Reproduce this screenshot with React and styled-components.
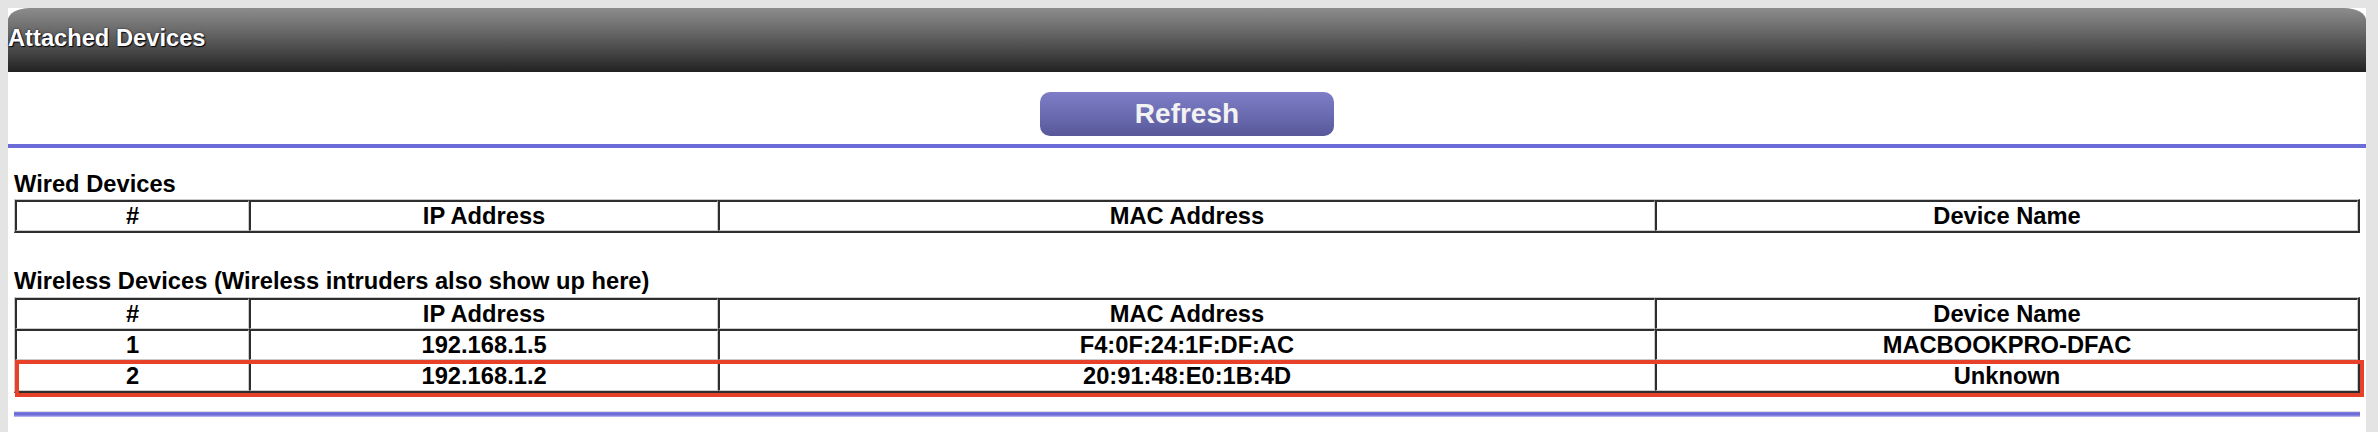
import React from "react";
import styled, { createGlobalStyle } from "styled-components";

const Global = createGlobalStyle`
  html, body { margin: 0; padding: 0; background: #e4e4e4; }
  body { font-family: "Liberation Sans", Arial, Helvetica, sans-serif; }
`;

const Panel = styled.div`
  margin: 8px 0 0 8px;
  width: 2358px;
  min-height: 424px;
  background: #ffffff;
`;

const Header = styled.div`
  height: 64px;
  box-sizing: border-box;
  padding-top: 16px;
  border-radius: 22px 22px 0 0 / 12px 12px 0 0;
  background: linear-gradient(to bottom, #8c8c8c 0%, #6a6a6a 35%, #444444 70%, #222222 100%);
  color: #ffffff;
  font-size: 23.7px;
  font-weight: bold;
  line-height: 28px;
  text-shadow: 0 0 2px #1a1a2e, 1px 1px 1px #000000;
`;

const ButtonRow = styled.div`
  height: 72px;
  box-sizing: border-box;
  padding-top: 20px;
  display: flex;
  justify-content: center;
`;

const RefreshButton = styled.button`
  width: 294px;
  height: 44px;
  border: none;
  border-radius: 10px;
  padding: 0;
  background: linear-gradient(to bottom, #7e7ec8 0%, #6c6cb2 50%, #57579a 100%);
  color: #f2f2f2;
  font-family: "Liberation Sans", Arial, sans-serif;
  font-weight: bold;
  font-size: 28px;
  line-height: 44px;
  cursor: pointer;
`;

const Rule = styled.div`
  height: 4px;
  background: #6c6cd8;
`;

const Content = styled.div`
  padding: 0 6px;
`;

const Heading = styled.div`
  margin-top: ${(p) => p.$top}px;
  font-size: 23.7px;
  font-weight: bold;
  line-height: 28px;
  color: #000;
  white-space: nowrap;
`;

const TableWrap = styled.div`
  position: relative;
  margin-top: ${(p) => p.$top}px;
`;

const Table = styled.table`
  width: 100%;
  table-layout: fixed;
  border-collapse: separate;
  border-spacing: 0;
  border-top: 1px solid #cacaca;
  border-left: 1px solid #cacaca;
  border-right: 2px solid #2e2e2e;
  border-bottom: 2px solid #2e2e2e;
`;

const Cell = styled.td`
  border-top: 2px solid #2e2e2e;
  border-left: 2px solid #2e2e2e;
  border-right: 1px solid #cacaca;
  border-bottom: 1px solid #cacaca;
  padding: 0;
  height: 28px;
  text-align: center;
  font-size: 23.7px;
  font-weight: bold;
  line-height: 28px;
  color: #000;
  white-space: nowrap;
`;

const Highlight = styled.div`
  position: absolute;
  left: 1px;
  top: 63px;
  width: 2349px;
  height: 37px;
  box-sizing: border-box;
  border: 4px solid #e8412a;
  pointer-events: none;
`;

const BottomRule = styled.div`
  margin-top: 18px;
  height: 6px;
  background: linear-gradient(
    to bottom,
    #dcdce6 0px,
    #dcdce6 1px,
    #8a8ae0 1px,
    #6c6cd8 2px,
    #6c6cd8 4px,
    #9c9ce4 5px,
    #c8c8ee 6px
  );
`;

const columns = ["10%", "20%", "40%", "30%"];
const headers = ["#", "IP Address", "MAC Address", "Device Name"];

const wireless = [
  ["1", "192.168.1.5", "F4:0F:24:1F:DF:AC", "MACBOOKPRO-DFAC"],
  ["2", "192.168.1.2", "20:91:48:E0:1B:4D", "Unknown"],
];

function DeviceTable({ rows }) {
  return (
    <Table>
      <colgroup>
        {columns.map((w, i) => (
          <col key={i} style={{ width: w }} />
        ))}
      </colgroup>
      <tbody>
        <tr>
          {headers.map((h) => (
            <Cell key={h}>{h}</Cell>
          ))}
        </tr>
        {rows.map((r) => (
          <tr key={r[0]}>
            {r.map((c, i) => (
              <Cell key={i}>{c}</Cell>
            ))}
          </tr>
        ))}
      </tbody>
    </Table>
  );
}

export default function App() {
  return (
    <>
      <Global />
      <Panel>
        <Header>Attached Devices</Header>
        <ButtonRow>
          <RefreshButton>Refresh</RefreshButton>
        </ButtonRow>
        <Rule />
        <Content>
          <Heading $top={22}>Wired Devices</Heading>
          <TableWrap $top={1}>
            <DeviceTable rows={[]} />
          </TableWrap>
          <Heading $top={34}>Wireless Devices (Wireless intruders also show up here)</Heading>
          <TableWrap $top={2}>
            <DeviceTable rows={wireless} />
            <Highlight />
          </TableWrap>
          <BottomRule />
        </Content>
      </Panel>
    </>
  );
}
